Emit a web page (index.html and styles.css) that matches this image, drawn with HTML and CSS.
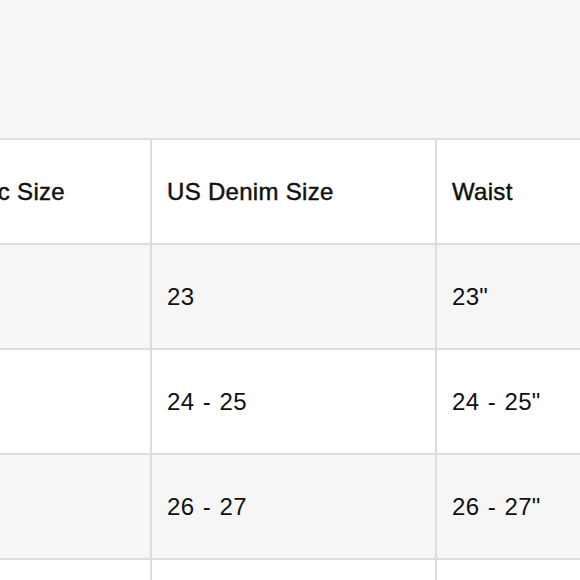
FILE: index.html
```html
<!DOCTYPE html>
<html lang="en">
<head>
<meta charset="utf-8">
<title>Size Chart</title>
<link rel="stylesheet" href="styles.css">
</head>
<body>
<div class="page">
  <div class="spacer"></div>
  <div class="scroller">
    <div class="chart">
      <div class="cell head first">Generic Size</div>
      <div class="cell head">US Denim Size</div>
      <div class="cell head">Waist</div>

      <div class="cell alt first">XXS</div>
      <div class="cell alt">23</div>
      <div class="cell alt">23"</div>

      <div class="cell first">XS</div>
      <div class="cell">24 - 25</div>
      <div class="cell">24 - 25"</div>

      <div class="cell alt first">S</div>
      <div class="cell alt">26 - 27</div>
      <div class="cell alt">26 - 27"</div>

      <div class="cell first">M</div>
      <div class="cell">28 - 29</div>
      <div class="cell">28 - 29"</div>
    </div>
  </div>
</div>
</body>
</html>
```

FILE: styles.css
```css
html, body {
  margin: 0;
  padding: 0;
  background: #f8f8f8;
  overflow: hidden;
}

.page {
  width: 580px;
  height: 580px;
  overflow: hidden;
  font-family: "Liberation Sans", Arial, sans-serif;
  color: #111111;
}

.spacer {
  height: 138px;
}

.scroller {
  overflow: hidden;
}

.chart {
  margin-left: -89px;
  width: 800px;
  display: grid;
  grid-template-columns: 239px 283px 276px;
  grid-auto-rows: 103px;
  gap: 2px;
  padding-top: 2px;
  background: #dcdcdc;
}

.cell {
  background: #ffffff;
  display: flex;
  align-items: center;
  padding: 0 15px;
  font-size: 24px;
  letter-spacing: 0.3px;
  word-spacing: 1.5px;
}

.cell.first {
  padding-left: 13px;
}

.cell.alt {
  background: #f6f6f6;
}

.cell.head {
  word-spacing: 0;
  -webkit-text-stroke: 0.45px #111111;
}
```
